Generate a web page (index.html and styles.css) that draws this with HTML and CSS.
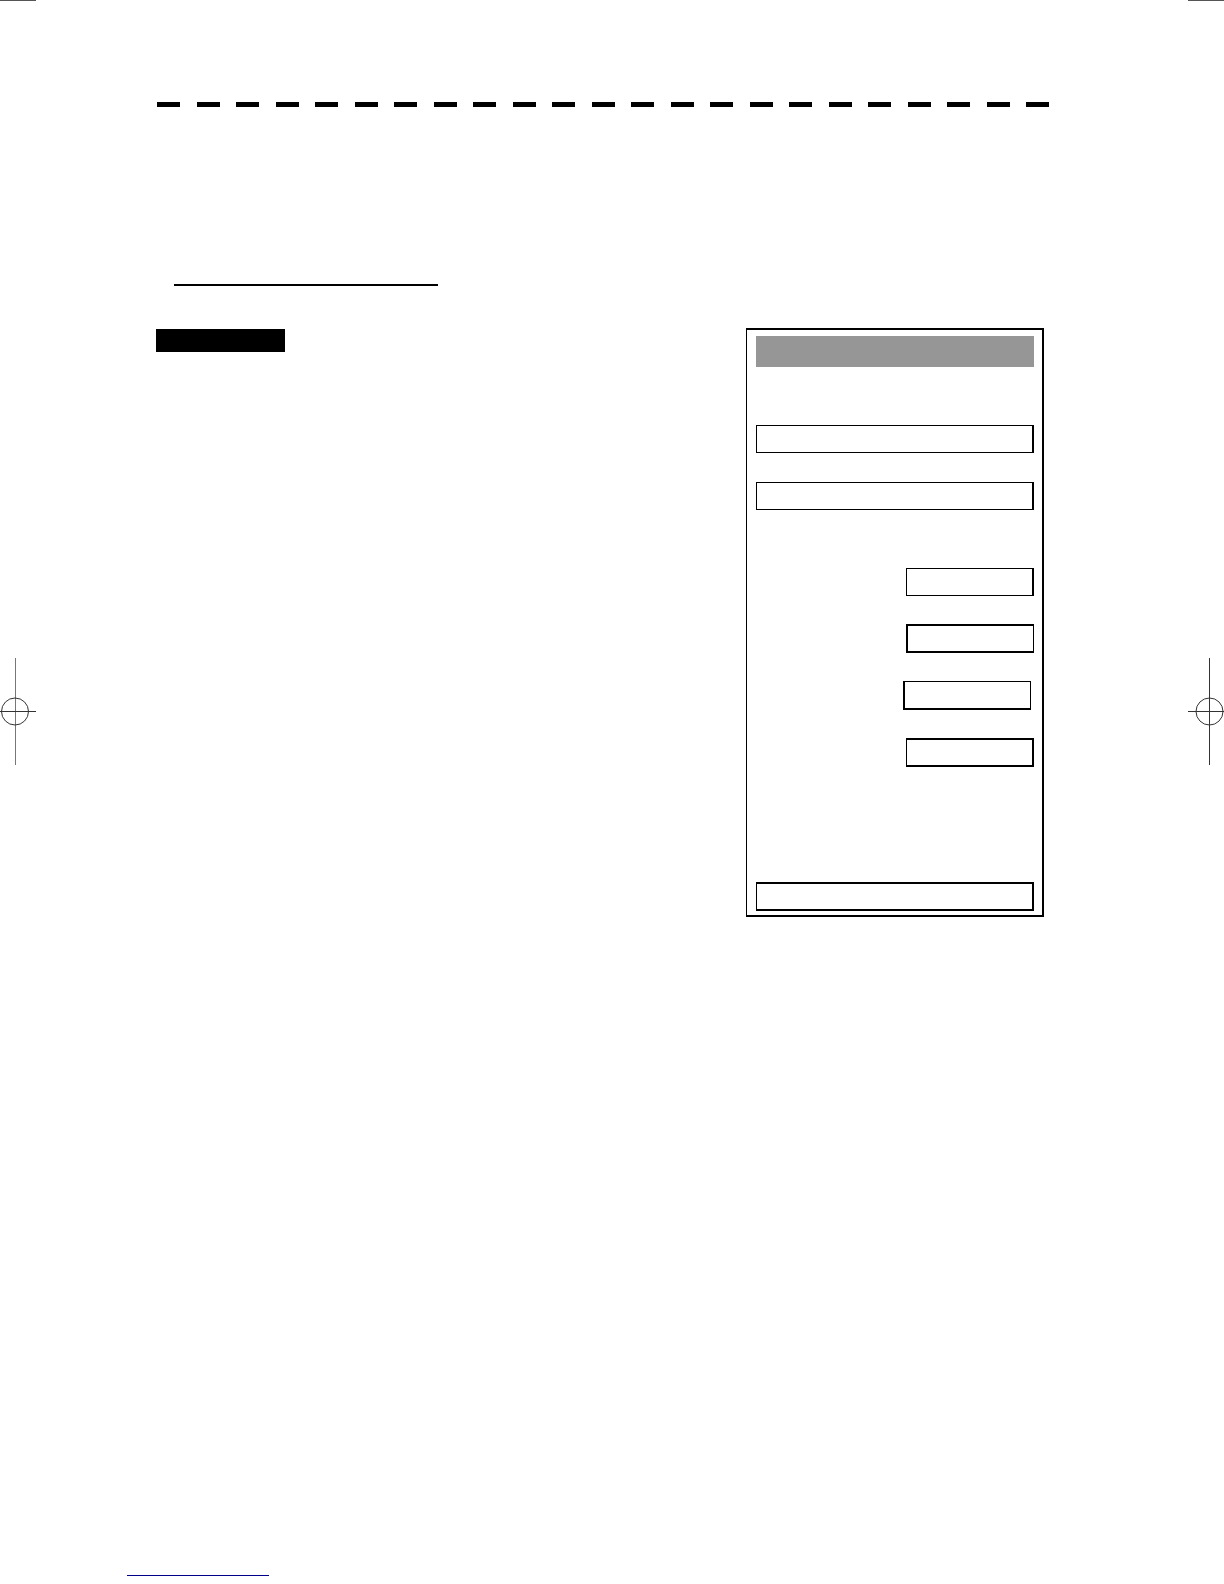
FILE: index.html
```html
<!DOCTYPE html>
<html lang="en">
<head>
<meta charset="utf-8">
<meta name="viewport" content="width=device-width, initial-scale=1">
<title>Settings</title>
<link rel="stylesheet" href="styles.css">
</head>
<body>
<div class="page">
  <div class="margin">
    <div class="trim"></div>
    <svg class="mark" width="36" height="107" viewBox="0 0 36 107" aria-hidden="true">
      <path class="soft" d="M15.500 0V107"/>
      <path d="M0 53.500H36"/>
      <circle cx="15" cy="53.500" r="13.500"/>
    </svg>
  </div>
  <main class="sheet">
    <div class="content">
      <div class="dashes">
        <span></span><span></span><span></span><span></span><span></span><span></span><span></span><span></span><span></span><span></span><span></span><span></span><span></span><span></span><span></span><span></span><span></span><span></span><span></span><span></span><span></span><span></span><span></span>
      </div>
      <div class="underline"></div>
      <div class="section">
        <div class="tag"></div>
        <form class="panel">
          <div class="panel-head"></div>
          <div class="group">
            <input class="field" type="text" aria-label="First wide field">
            <input class="field" type="text" aria-label="Second wide field">
          </div>
          <div class="group group-short">
            <input class="field" type="text" aria-label="First short field">
            <input class="field heavy heavy-left" type="text" aria-label="Second short field">
            <input class="field heavy-left inset" type="text" aria-label="Third short field">
            <input class="field heavy" type="text" aria-label="Fourth short field">
          </div>
          <input class="field heavy" type="text" aria-label="Last wide field">
        </form>
      </div>
    </div>
    <footer class="footer"><a class="link" href="#" aria-label="Website"></a></footer>
  </main>
  <div class="margin">
    <div class="trim"></div>
    <svg class="mark" width="36" height="107" viewBox="0 0 36 107" aria-hidden="true">
      <path d="M21.500 0V107M0 53.500H36"/>
      <circle cx="21.500" cy="53.500" r="13.500"/>
    </svg>
  </div>
</div>
</body>
</html>
```
FILE: styles.css
```css
* {
  box-sizing: border-box;
}

body {
  margin: 0;
  background: #fff;
  font-family: "Liberation Sans", Arial, sans-serif;
}

.page {
  display: flex;
  min-height: 100vh;
}

/* Outer margins with trim lines and registration marks */
.margin {
  flex: 0 0 36px;
}

.trim {
  height: 1px;
  background: #555;
}

.mark {
  display: block;
  margin-top: 657px;
  fill: none;
  stroke: #333;
  stroke-width: 1;
}

.soft {
  stroke: #777;
}

.sheet {
  flex: 1;
  display: flex;
  flex-direction: column;
  padding: 102px 139px 8px 91px;
}

.content {
  padding-left: 29px;
}

.dashes {
  display: flex;
  justify-content: space-between;
  padding-left: 1px;
}

.dashes span {
  width: 23px;
  height: 5px;
  background: #000;
}

.underline {
  width: 264px;
  height: 2px;
  margin: 177px 0 42px 18px;
  background: #000;
}

.section {
  display: flex;
  justify-content: space-between;
  align-items: flex-start;
  padding-right: 5px;
}

.tag {
  width: 129px;
  height: 23px;
  margin-top: 1px;
  background: #000;
}

.panel {
  display: flex;
  flex-direction: column;
  width: 298px;
  padding: 6px 8px 4px 9px;
  border: 2px solid #000;
  border-left-width: 1px;
}

.panel-head {
  height: 31px;
  margin-bottom: 58px;
  background: #969696;
}

.group {
  display: flex;
  flex-direction: column;
  gap: 29px;
  margin-bottom: 58px;
}

.group-short {
  align-items: flex-end;
  gap: 28px;
  margin-bottom: 115px;
}

.field {
  width: 100%;
  height: 28px;
  margin: 0;
  padding: 0 6px;
  border: 1px solid #000;
  border-right-width: 2px;
  border-radius: 0;
  background: #fff;
  font: 16px "Liberation Sans", Arial, sans-serif;
}

.group-short .field {
  width: 128px;
}

.field.heavy {
  height: 29px;
  border-top-width: 2px;
  border-bottom-width: 2px;
}

.field.heavy-left {
  height: 29px;
  border-right-width: 1px;
  border-bottom-width: 2px;
  border-left-width: 2px;
}

.inset {
  margin-right: 3px;
}

.footer {
  margin-top: auto;
}

.link {
  display: block;
  width: 142px;
  border-bottom: 1px solid #00008b;
}
```
